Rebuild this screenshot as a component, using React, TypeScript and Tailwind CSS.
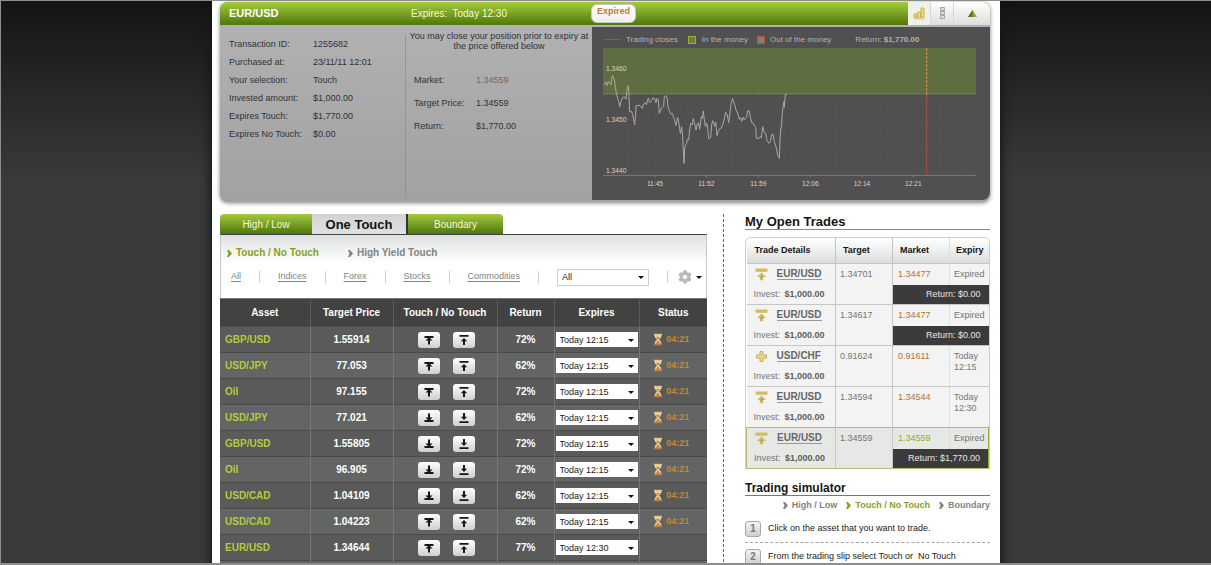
import React from 'react';
import { FaCog } from 'react-icons/fa';

type Direction = 'up' | 'down';

const details = [
  ['Transaction ID:', '1255682'],
  ['Purchased at:', '23/11/11 12:01'],
  ['Your selection:', 'Touch'],
  ['Invested amount:', '$1,000.00'],
  ['Expires Touch:', '$1,770.00'],
  ['Expires No Touch:', '$0.00'],
];

const assets: { name: string; price: string; dir: Direction; pct: string; expires: string; left?: string }[] = [
  { name: 'GBP/USD', price: '1.55914', dir: 'up', pct: '72%', expires: 'Today 12:15', left: '04:21' },
  { name: 'USD/JPY', price: '77.053', dir: 'up', pct: '62%', expires: 'Today 12:15', left: '04:21' },
  { name: 'Oil', price: '97.155', dir: 'up', pct: '72%', expires: 'Today 12:15', left: '04:21' },
  { name: 'USD/JPY', price: '77.021', dir: 'down', pct: '62%', expires: 'Today 12:15', left: '04:21' },
  { name: 'GBP/USD', price: '1.55805', dir: 'down', pct: '72%', expires: 'Today 12:15', left: '04:21' },
  { name: 'Oil', price: '96.905', dir: 'down', pct: '72%', expires: 'Today 12:15', left: '04:21' },
  { name: 'USD/CAD', price: '1.04109', dir: 'down', pct: '62%', expires: 'Today 12:15', left: '04:21' },
  { name: 'USD/CAD', price: '1.04223', dir: 'up', pct: '62%', expires: 'Today 12:15', left: '04:21' },
  { name: 'EUR/USD', price: '1.34644', dir: 'up', pct: '77%', expires: 'Today 12:30' },
];

const trades = [
  { pair: 'EUR/USD', kind: 'touch', target: '1.34701', market: '1.34477', expiry: 'Expired', result: '$0.00' },
  { pair: 'EUR/USD', kind: 'touch', target: '1.34617', market: '1.34477', expiry: 'Expired', result: '$0.00' },
  { pair: 'USD/CHF', kind: 'range', target: '0.91624', market: '0.91611', expiry: 'Today 12:15' },
  { pair: 'EUR/USD', kind: 'touch', target: '1.34594', market: '1.34544', expiry: 'Today 12:30' },
  { pair: 'EUR/USD', kind: 'touch', target: '1.34559', market: '1.34559', expiry: 'Expired', result: '$1,770.00', won: true },
];

const categories = ['All', 'Indices', 'Forex', 'Stocks', 'Commodities'];

const steps = [
  'Click on the asset that you want to trade.',
  'From the trading slip select Touch or  No Touch depending on whether you think that the price will',
];

const pricePath =
  '58,255 62,245 66,257 70,243 74,250 78,255 80,235 83,226 86,235 89,243 91,262 94,278 98,295 102,308 104,320 108,305 112,294 118,290 123,298 125,275 128,257 131,262 132,290 134,335 140,335 144,348 149,374 152,345 153,317 165,316 172,325 176,312 181,308 184,314 190,294 194,308 200,303 203,294 209,296 213,308 216,295 220,300 223,340 229,325 236,318 238,290 243,287 246,292 249,320 254,335 258,343 262,340 268,358 273,376 278,352 282,372 286,400 290,380 293,410 295,450 297,490 299,445 302,435 305,430 307,418 311,420 314,390 317,370 321,375 325,356 329,372 333,390 337,372 341,369 344,388 349,350 352,355 355,333 358,360 361,379 365,370 368,385 371,416 377,413 380,375 383,362 386,368 389,379 392,366 396,407 400,393 405,385 409,384 414,372 418,355 422,337 427,345 431,368 436,330 439,305 443,296 446,306 449,313 453,330 458,340 463,358 467,353 470,364 475,352 478,360 485,350 488,332 493,333 495,348 500,368 504,368 508,378 512,380 514,415 522,415 526,410 529,414 533,380 537,396 542,400 546,422 552,430 556,425 560,404 564,403 568,425 573,440 578,465 583,475 585,420 587,390 590,375 591,350 594,320 597,305 598,322 601,283 606,283';

const timeTicks: [number, string][] = [
  [210, '11:45'],
  [364, '11:52'],
  [520, '11:59'],
  [676, '12:06'],
  [831, '12:14'],
  [985, '12:21'],
];

function Select({ label, options, className }: { label: string; options: string[]; className: string }) {
  return (
    <div className={`relative ${className}`}>
      <select
        aria-label={label}
        className="block h-full w-full appearance-none bg-white pt-px pl-1 text-[9px] leading-none text-[#222]"
      >
        {options.map((o) => (
          <option key={o}>{o}</option>
        ))}
      </select>
      <svg viewBox="0 0 6 3" className="pointer-events-none absolute top-1/2 right-1 -mt-px h-[3px] w-1.5">
        <path d="M0 0h6L3 3z" fill="#111" />
      </svg>
    </div>
  );
}

function TouchIcon({ dir, touching }: { dir: Direction; touching: boolean }) {
  return (
    <svg viewBox="0 0 10 10" className={dir === 'down' ? 'size-2.5 rotate-180' : 'size-2.5'}>
      {touching ? (
        <path d="M.5 1h9v2H6L8.500 5.600H6V9.500H4V5.600H1.500L4 3H.5z" fill="#161616" />
      ) : (
        <path d="M.5 0h9v1.800h-9zM5 3l3.200 3.200H6V10H4V6.200H1.800z" fill="#161616" />
      )}
    </svg>
  );
}

function Hourglass() {
  return (
    <svg viewBox="0 0 10 13" className="h-[13px] w-2.5">
      <path d="M1.500 2h7L8 4.500 6 6.500l2 2.200.5 2.300h-7L2 8.700l2-2.200-2-2z" fill="#ead2a0" />
      <path d="M3 4h4L5.200 6.200h-.5zM5 7.500l2.500 3h-5z" fill="#cf8538" />
      <path d="M1 .8h8v1.700H1z" fill="#e7c58b" />
      <path d="M1 10.500h8v1.800H1z" fill="#c8753a" />
    </svg>
  );
}

function TradeIcon({ kind }: { kind: string }) {
  if (kind === 'range') {
    return (
      <svg viewBox="0 0 13 13" className="size-[13px]">
        <path d="M5 1.500h3V5h3.500v3H8v3.500H5V8H1.500V5H5z" fill="#e9d99a" stroke="#cdaa5e" />
        <path d="M6 6h1v1H6z" fill="#b3b53c" />
      </svg>
    );
  }
  return (
    <svg viewBox="0 0 13 13" className="size-[13px]">
      <path d="M.5.5h12v3H.5z" fill="#d0bf5c" />
      <path d="M1 2.800h11v1H1z" fill="#dcbb85" />
      <path d="M6.500 4.500l4.500 4.500H8.200v3.200H4.800V9H2z" fill="#d2b862" />
      <path d="M6 8h1v2H6z" fill="#a68a2c" />
    </svg>
  );
}

function Chevron() {
  return (
    <svg viewBox="0 0 5 7" className="h-[7px] w-[5px] shrink-0">
      <path d="M0 0h2l3 3.500L2 7H0l1.500-3.500z" fill="currentColor" />
    </svg>
  );
}

function PriceChart() {
  return (
    <svg viewBox="21 144 1194 450" className="block w-full">
      <g stroke="#5d5d5d" strokeWidth="2" strokeDasharray="3 6">
        {[130, 210, 286, 364, 442, 520, 598, 676, 754, 831, 907, 985, 1063, 1141].map((x) => (
          <path key={x} d={`M${x} 282V526`} />
        ))}
        {[295, 373, 449].map((y) => (
          <path key={y} d={`M54 ${y}H1173`} />
        ))}
      </g>
      <path d="M54 144H1173V282H54z" fill="#5f6e41" />
      <path d="M54 282H1173" stroke="#8f9a7d" strokeWidth="3" strokeDasharray="3 3" />
      <path d="M54 526H1173" stroke="#7c7c7c" strokeWidth="3" />
      <path d="M1025 144V282" stroke="#cf9150" strokeWidth="3" strokeDasharray="9 3" />
      <path d="M1025 282V526" stroke="#b04e42" strokeWidth="3" />
      <polyline points={pricePath} fill="none" stroke="#a9a9a5" strokeWidth="3" />
      <g fill="#d4d4d4" fontSize="20">
        <text x="63" y="213">1.3460</text>
        <text x="63" y="366">1.3450</text>
        <text x="63" y="519">1.3440</text>
        {timeTicks.map(([x, t]) => (
          <text key={t} x={x} y="559" textAnchor="middle">
            {t}
          </text>
        ))}
      </g>
      {timeTicks.map(([x]) => (
        <path key={x} d={`M${x} 526v6`} stroke="#7c7c7c" strokeWidth="3" />
      ))}
    </svg>
  );
}

function PositionPanel() {
  return (
    <section className="overflow-hidden rounded-lg bg-[#a3a39c] pb-[2px] shadow-[0_1px_4px_rgba(0,0,0,0.5)]">
      <header className="flex h-[23px] items-stretch bg-linear-to-b from-[#a5cc3d] to-[#50780a] text-white">
        <div className="flex w-[191px] items-center pl-[9px] text-[11px] font-bold">EUR/USD</div>
        <div className="flex w-[180px] items-center text-[10px] whitespace-pre text-[#f6fbd8]">Expires:  Today 12:30</div>
        <div className="mt-0.5 h-[19px] w-[45px] rounded-md border border-[#c9c9c9] bg-linear-to-b from-white to-[#efefef] text-center text-[9px] leading-[13px] font-bold text-[#c2773a]">
          Expired
        </div>
        <div className="ml-auto flex divide-x divide-[#d6d6d6] bg-linear-to-b from-white to-[#dcdfdb]">
          <button aria-label="Chart view" className="flex w-[23px] items-center justify-center bg-[#eef0ea]">
            <svg viewBox="0 0 12 13" className="h-[13px] w-3">
              <path d="M1 7h3v4H1zM4.500 5h3v6h-3zM8 1h3v10H8z" fill="#e2dc8c" stroke="#cdb14c" />
              <path d="M1 12h10v1H1z" fill="#ead9ae" />
            </svg>
          </button>
          <button aria-label="List view" className="flex w-[23px] items-center justify-center">
            <svg viewBox="0 0 5 13" className="h-[13px] w-[5px]">
              <path d="M.5.5h4v3h-4zM.5 4.500h4v3h-4zM.5 8.500h4v3h-4z" fill="#ddd" stroke="#a5a5a5" />
            </svg>
          </button>
          <button aria-label="Collapse" className="flex w-9 items-center justify-center">
            <svg viewBox="0 0 9 7" className="h-[7px] w-[9px]">
              <path d="M4.500 0L9 7H0z" fill="#83a82a" />
              <path d="M4.500 0v7H0z" fill="#60742a" />
            </svg>
          </button>
        </div>
      </header>

      <div className="flex bg-linear-to-b from-[#b1b1b1] to-[#a1a1a1] pt-0.5">
        <dl className="mt-2 mb-1 grid w-[186px] shrink-0 grid-cols-[84px_1fr] content-start border-r border-dotted border-[#7f7f7f] pl-[9px] text-[9px] leading-[18px] text-[#2f3236]">
          {details.map(([k, v]) => (
            <React.Fragment key={k}>
              <dt>{k}</dt>
              <dd>{v}</dd>
            </React.Fragment>
          ))}
        </dl>
        <div className="mt-1 w-[186px] shrink-0 text-[9px] text-[#2f3236]">
          <p className="text-center leading-[10px]">
            You may close your position prior to expiry at
            <br />
            the price offered below
          </p>
          <dl className="mt-[18px] grid grid-cols-[62px_1fr] pl-2 leading-[23px]">
            <dt>Market:</dt>
            <dd className="text-[#7d6650]">1.34559</dd>
            <dt>Target Price:</dt>
            <dd>1.34559</dd>
            <dt>Return:</dt>
            <dd>$1,770.00</dd>
          </dl>
        </div>
        <div className="flex-1 rounded-br-lg bg-[#505050] pb-0.5">
          <div className="flex h-[21px] items-center pt-1 pl-3 text-[8px] text-[#b4b4b4]">
            <span className="mr-[5px] h-px w-[17px] bg-[#8c5a50]" />
            Trading closes
            <span className="mr-1.5 ml-[10px] size-2 border border-[#9db02d] bg-[#6b7d3a]" />
            In the money
            <span className="mr-[5px] ml-[9px] size-2 border border-[#b5533f] bg-[#8b7b70]" />
            Out of the money
            <span className="ml-6">
              Return: <b>$1,770.00</b>
            </span>
          </div>
          <PriceChart />
        </div>
      </div>
    </section>
  );
}

function AssetTable() {
  const head = 'border-r border-[#5a5a5a]';
  const cell = 'border-r border-[#767676]';
  return (
    <table className="w-full table-fixed border-collapse border-t border-[#77776a] text-[10px] font-bold text-white">
      <colgroup>
        <col className="w-[90px]" />
        <col className="w-[83px]" />
        <col className="w-[104px]" />
        <col className="w-[57px]" />
        <col className="w-[85px]" />
        <col />
      </colgroup>
      <thead>
        <tr className="h-7 bg-[#424242]">
          <th className={head}>Asset</th>
          <th className={head}>Target Price</th>
          <th className={head}>Touch / No Touch</th>
          <th className={head}>Return</th>
          <th className={head}>Expires</th>
          <th>Status</th>
        </tr>
      </thead>
      <tbody>
        {assets.map((a, i) => (
          <tr key={i} className="h-[26px] border-t border-[#4a4a4a] odd:bg-[#5a5a5a] even:bg-[#636565]">
            <td className={`${cell} pl-[5px] text-[#b3cc3a]`}>{a.name}</td>
            <td className={`${cell} text-center`}>{a.price}</td>
            <td className={cell}>
              <div className="flex justify-center gap-[13px] pl-0.5">
                {[true, false].map((touching) => (
                  <button
                    key={String(touching)}
                    aria-label={touching ? 'Touch' : 'No Touch'}
                    className="flex h-4 w-[22px] items-center justify-center rounded-[3px] bg-linear-to-b from-white to-[#cfcfcf]"
                  >
                    <TouchIcon dir={a.dir} touching={touching} />
                  </button>
                ))}
              </div>
            </td>
            <td className={`${cell} text-center`}>{a.pct}</td>
            <td className={`${cell} px-px`}>
              <Select label={`${a.name} expiry`} options={[a.expires]} className="h-[15px] font-normal" />
            </td>
            <td>
              {a.left && (
                <div className="flex items-center justify-center gap-[3px] pr-1 text-[9px] text-[#c08a30]">
                  <Hourglass />
                  {a.left}
                </div>
              )}
            </td>
          </tr>
        ))}
        <tr className="h-[26px] border-t border-[#4a4a4a] bg-[#636565]">
          <td colSpan={6} />
        </tr>
      </tbody>
    </table>
  );
}

function MarketPanel() {
  const greenTab = 'h-5 bg-linear-to-b from-[#a5cc3d] to-[#4e760b] text-[10px] text-[#f4f8dc]';
  return (
    <section className="w-[487px] shrink-0">
      <div className="flex items-stretch">
        <button className={`${greenTab} w-[92px] rounded-tl-[4px]`}>High / Low</button>
        <button className="h-5 w-24 border-r-2 border-[#333] bg-linear-to-b from-[#d2d2d2] to-[#e0e2e2] text-[13px] leading-none font-bold text-[#111]">
          One Touch
        </button>
        <button className={`${greenTab} w-[95px] rounded-tr-[4px]`}>Boundary</button>
      </div>
      <div className="h-16 border-x border-t border-x-[#c8c8c8] border-t-[#444] bg-linear-to-b from-[#dfe1e1] via-white via-45% to-white">
        <div className="flex gap-[29px] pt-2.5 pl-1.5 text-[10px] leading-4 font-bold">
          <button className="flex items-center gap-1 text-[#87a01c]">
            <Chevron />
            Touch / No Touch
          </button>
          <button className="flex items-center gap-1 text-[#828282]">
            <Chevron />
            High Yield Touch
          </button>
        </div>
        <nav className="mt-[7px] flex h-[18px] items-center gap-[18px] pl-2.5 text-[9px] text-[#7b8680]">
          {categories.map((c) => (
            <React.Fragment key={c}>
              <a href="#" className="underline underline-offset-2">
                {c}
              </a>
              <span className="h-3 w-px bg-[#cfcfcf]" />
            </React.Fragment>
          ))}
          <Select label="Asset" options={['All']} className="h-[17px] w-[92px] border border-[#cfcfcf]" />
          <span className="h-3 w-px bg-[#cfcfcf]" />
          <button aria-label="Settings" className="-ml-2 flex items-center gap-1">
            <FaCog className="size-3.5 text-[#b9b9b9]" />
            <svg viewBox="0 0 6 3" className="h-[3px] w-1.5">
              <path d="M0 0h6L3 3z" fill="#111" />
            </svg>
          </button>
        </nav>
      </div>
      <AssetTable />
    </section>
  );
}

function OpenTrades() {
  return (
    <section>
      <h2 className="border-b border-[#8a8a8a] text-[13px] leading-[15px] font-bold text-[#151515]">My Open Trades</h2>
      <div className="mt-[7px] overflow-hidden rounded-t-md border border-b-0 border-[#cfcfcf]">
        <table className="w-full table-fixed border-collapse text-left text-[9px] text-[#757575]">
          <colgroup>
            <col className="w-[89px]" />
            <col className="w-[57px]" />
            <col className="w-[57px]" />
            <col />
          </colgroup>
          <thead>
            <tr className="h-[25px] bg-linear-to-b from-white to-[#dcdede] text-[#151515]">
              <th className="border-r border-[#c4c4c4] pl-2">Trade Details</th>
              <th className="border-r border-[#c4c4c4] pl-[7px]">Target</th>
              <th className="border-r border-[#dedede] pl-[7px]">Market</th>
              <th className="pl-1.5">Expiry</th>
            </tr>
          </thead>
          {trades.map((t, i) => {
            const span = t.result ? 1 : 2;
            return (
              <tbody
                key={i}
                className={t.won ? 'border border-[#bfb47c] border-r-[#8fae2c] bg-[#e6e8e6]' : 'border-t border-[#c6c6c6] bg-[#f3f3f3]'}
              >
                <tr className="h-[22px] align-top">
                  <td rowSpan={2} className="border-r border-[#c6c6c6]">
                    <div className="flex items-center gap-[9px] pt-1 pl-2 leading-[13px]">
                      <TradeIcon kind={t.kind} />
                      <a href="#" className="border-b border-[#999] text-[10px] leading-[11px] font-bold text-[#666]">
                        {t.pair}
                      </a>
                    </div>
                    <div className="mt-2 pl-[7px] leading-[11px]">
                      Invest: <b className="pl-0.5 text-[#5e5e5e]">$1,000.00</b>
                    </div>
                  </td>
                  <td rowSpan={2} className="border-r border-[#c6c6c6] pt-[5px] pl-1 leading-[11px]">
                    {t.target}
                  </td>
                  <td rowSpan={span} className={`pt-[5px] pl-[5px] leading-[11px] ${t.won ? 'text-[#8fae1c]' : 'text-[#b5722e]'}`}>
                    {t.market}
                  </td>
                  <td rowSpan={span} className="border-l border-dotted border-[#d2d2d2] pt-[5px] pl-1 leading-[11px]">
                    {t.expiry}
                  </td>
                </tr>
                <tr className="h-[19px]">
                  {t.result && (
                    <td colSpan={2} className="bg-[#3b3b3b] pr-2 text-right text-[#e6e6e6]">
                      Return: {t.result}
                    </td>
                  )}
                </tr>
              </tbody>
            );
          })}
        </table>
      </div>
    </section>
  );
}

function Simulator() {
  return (
    <section className="mt-3">
      <h2 className="border-b border-[#777] text-[12px] leading-[14px] font-bold text-[#151515]">Trading simulator</h2>
      <div className="flex justify-end gap-[9px] pt-[3px] text-[9px] leading-[13px] font-bold text-[#838383]">
        <button className="flex items-center gap-1">
          <Chevron />
          High / Low
        </button>
        <button className="flex items-center gap-1 text-[#87a01c]">
          <Chevron />
          Touch / No Touch
        </button>
        <button className="flex items-center gap-1">
          <Chevron />
          Boundary
        </button>
      </div>
      <ol className="divide-y divide-dashed divide-[#a5a5a5] text-[9px] leading-[11px] text-[#222]">
        {steps.map((s, i) => (
          <li key={i} className="flex gap-[7px] pt-1.5 pb-[5px] first:pt-[9px]">
            <span className="flex size-4 shrink-0 items-center justify-center rounded-[3px] border border-[#a9a9a9] bg-linear-to-b from-[#f4f4f4] to-[#cfcfcf] text-[10px] font-bold text-[#777]">
              {i + 1}
            </span>
            <span className="pt-0.5 whitespace-pre-wrap">{s}</span>
          </li>
        ))}
      </ol>
    </section>
  );
}

export default function App() {
  return (
    <div className="h-screen overflow-hidden border-t border-b-2 border-l border-[#8d8d8d] bg-[#3a3a3a] bg-[linear-gradient(#141414,#3a3a3a_180px)] font-['Liberation_Sans',Arial,sans-serif]">
      <main className="mx-auto min-h-full w-[788px] bg-white pt-px pr-2.5 pl-2 shadow-[0_0_9px_2px_#161616]">
        <PositionPanel />
        <div className="mt-3 flex">
          <MarketPanel />
          <div className="ml-4 flex-1 border-l border-dashed border-[#666] pl-[21px]">
            <OpenTrades />
            <Simulator />
          </div>
        </div>
      </main>
    </div>
  );
}
